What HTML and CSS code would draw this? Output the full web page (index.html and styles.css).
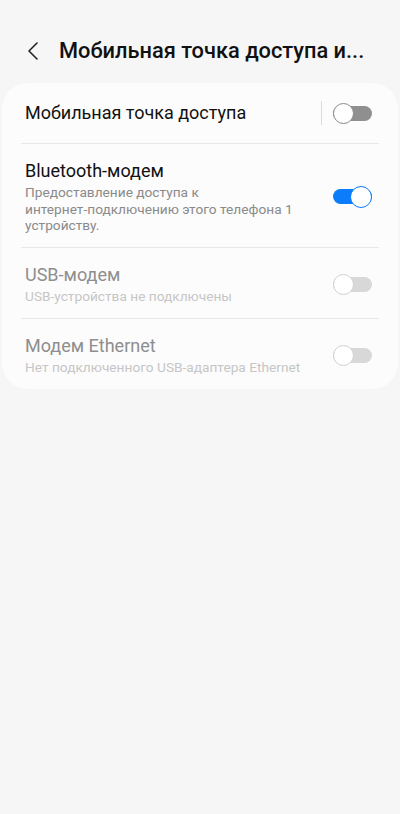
FILE: index.html
```html
<!DOCTYPE html>
<html lang="ru">
<head>
  <meta charset="UTF-8" />
  <meta name="viewport" content="width=device-width, initial-scale=1.0"/>
  <title>Мобильная точка доступа и модем</title>
  <link rel="stylesheet" href="styles.css">
</head>
<body>
  <header class="topbar">
    <button class="back-btn" aria-label="Назад">
      <svg width="14" height="22" viewBox="0 0 14 22">
        <path d="M11 3 L3 11 L11 19" fill="none" stroke="#222" stroke-width="1.6" stroke-linecap="round" stroke-linejoin="round"/>
      </svg>
    </button>
    <h1>Мобильная точка доступа и...</h1>
  </header>

  <main class="card">
    <div class="row row-single">
      <div class="row-text">
        <div class="row-title">Мобильная точка доступа</div>
      </div>
      <span class="vsep"></span>
      <span class="switch off"></span>
    </div>

    <div class="row">
      <div class="row-text">
        <div class="row-title">Bluetooth-модем</div>
        <div class="row-sub">Предоставление доступа к<br>интернет-подключению этого телефона 1 устройству.</div>
      </div>
      <span class="switch on"></span>
    </div>

    <div class="row disabled">
      <div class="row-text">
        <div class="row-title">USB-модем</div>
        <div class="row-sub">USB-устройства не подключены</div>
      </div>
      <span class="switch"></span>
    </div>

    <div class="row disabled">
      <div class="row-text">
        <div class="row-title">Модем Ethernet</div>
        <div class="row-sub">Нет подключенного USB-адаптера Ethernet</div>
      </div>
      <span class="switch"></span>
    </div>
  </main>
</body>
</html>
```

FILE: styles.css
```css
html, body {
  margin: 0;
  font-family: Roboto, "Noto Sans", "Liberation Sans", sans-serif;
  background: #f6f6f6;
  color: #111;
}
.topbar {
  display: flex;
  align-items: center;
  height: 83px;
  padding: 17px 0 0 26px;
  box-sizing: border-box;
}
.back-btn {
  background: none;
  border: none;
  padding: 0;
  width: 14px;
  height: 22px;
  margin-top: 2px;
}
.topbar h1 {
  margin: 0 0 0 19px;
  font-size: 21.8px;
  font-weight: 500;
  color: #111;
  white-space: nowrap;
}
.card {
  margin: 0 2px;
  background: #fcfcfc;
  border-radius: 26px;
  padding: 0 19px;
}
.row {
  display: flex;
  align-items: center;
  padding: 16px 7px 13.5px 4px;
  border-bottom: 1px solid #e8e8e8;
}
.row:last-child {
  border-bottom: none;
}
.row-single {
  padding: 18px 7px 18px 4px;
}
.row-text {
  flex: 1;
  min-width: 0;
}
.row-title {
  font-size: 18px;
  line-height: 22px;
  color: #111;
}
.row-sub {
  margin-top: 2px;
  font-size: 13.7px;
  line-height: 16.5px;
  color: #8a8a8a;
  max-width: 285px;
}
.disabled .row-title {
  color: #8e8e8e;
}
.disabled .row-sub {
  color: #c6c6c6;
}
.vsep {
  width: 1px;
  height: 24px;
  background: #dcdcdc;
  margin-right: 11px;
}
.switch {
  position: relative;
  flex: none;
  width: 39px;
  height: 15px;
  border-radius: 8px;
  background: #d8d8d8;
}
.switch::after {
  content: '';
  position: absolute;
  top: -3px;
  left: 0;
  width: 21px;
  height: 21px;
  border-radius: 50%;
  background: #fff;
  border: 1.5px solid #cfcfcf;
  box-sizing: border-box;
}
.switch.off {
  background: #8f8f8f;
}
.switch.off::after {
  border-color: #8a8a8a;
}
.switch.on {
  background: #0b7cfb;
}
.switch.on::after {
  left: auto;
  right: 0;
  width: 22px;
  height: 22px;
  top: -3.5px;
  border-color: #0b7cfb;
}
```
